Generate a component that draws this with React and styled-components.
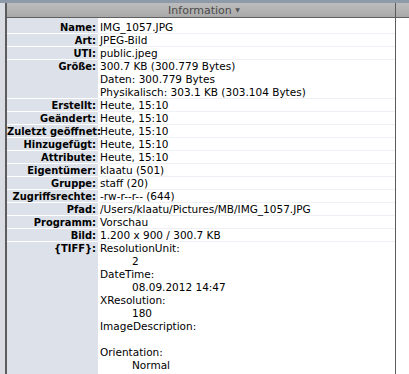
import React from 'react';
import styled, { createGlobalStyle } from 'styled-components';

const rows = [
  { label: 'Name', lines: ['IMG_1057.JPG'] },
  { label: 'Art', lines: ['JPEG-Bild'] },
  { label: 'UTI', lines: ['public.jpeg'] },
  {
    label: 'Größe',
    lines: ['300.7 KB (300.779 Bytes)', 'Daten: 300.779 Bytes', 'Physikalisch: 303.1 KB (303.104 Bytes)'],
  },
  { label: 'Erstellt', lines: ['Heute, 15:10'] },
  { label: 'Geändert', lines: ['Heute, 15:10'] },
  { label: 'Zuletzt geöffnet', lines: ['Heute, 15:10'] },
  { label: 'Hinzugefügt', lines: ['Heute, 15:10'] },
  { label: 'Attribute', lines: ['Heute, 15:10'] },
  { label: 'Eigentümer', lines: ['klaatu (501)'] },
  { label: 'Gruppe', lines: ['staff (20)'] },
  { label: 'Zugriffsrechte', lines: ['-rw-r--r-- (644)'] },
  { label: 'Pfad', lines: ['/Users/klaatu/Pictures/MB/IMG_1057.JPG'] },
  { label: 'Programm', lines: ['Vorschau'] },
  { label: 'Bild', lines: ['1.200 x 900 / 300.7 KB'] },
];

const tiff = [
  ['ResolutionUnit:', '2'],
  ['DateTime:', '08.09.2012 14:47'],
  ['XResolution:', '180'],
  ['ImageDescription:', ''],
  ['Orientation:', 'Normal'],
];

function App() {
  return (
    <>
      <GlobalStyle />
      <Window>
        <TopStrip />
        <Main>
          <Gutter />
          <Table>
            <HeaderCell>
              Information <Caret>▼</Caret>
            </HeaderCell>
            <Rows>
              {rows.map((r) => (
                <Row key={r.label}>
                  <Label>{r.label}:</Label>
                  <Value>
                    {r.lines.map((l) => (
                      <Line key={l}>{l}</Line>
                    ))}
                  </Value>
                </Row>
              ))}
              <Row $last>
                <Label $last>{'{TIFF}'}:</Label>
                <Value $last>
                  {tiff.map(([k, v]) => (
                    <React.Fragment key={k}>
                      <Line>{k}</Line>
                      <Line $indent>{v || '\u00a0'}</Line>
                    </React.Fragment>
                  ))}
                </Value>
              </Row>
            </Rows>
          </Table>
          <Extra>
            <HeaderCell />
          </Extra>
        </Main>
      </Window>
    </>
  );
}

export default App;

const GlobalStyle = createGlobalStyle`
  html, body {
    margin: 0;
    padding: 0;
    background: #fff;
  }
  body {
    font-family: "DejaVu Sans", "Liberation Sans", sans-serif;
  }
`;

const Window = styled.div`
  width: 409px;
  height: 374px;
  overflow: hidden;
  display: flex;
  flex-direction: column;
  background: #fff;
`;

const TopStrip = styled.div`
  height: 3px;
  background: #8f9aa9;
  flex: none;
`;

const Main = styled.div`
  flex: 1;
  display: flex;
  min-height: 0;
`;

const Gutter = styled.div`
  width: 5px;
  background: #d9dce3;
  flex: none;
`;

const Table = styled.div`
  width: 388px;
  flex: none;
  border-left: 2px solid #5c5c5c;
  border-right: 1px solid #5c5c5c;
  background: linear-gradient(to right, #dde2ea 91px, #fff 91px);
  display: flex;
  flex-direction: column;
`;

const Extra = styled.div`
  flex: 1;
  background: #fff;
`;

const HeaderCell = styled.div`
  height: 14px;
  border-bottom: 1px solid #5f5f5f;
  background: linear-gradient(#bdbdbd, #a9a9a9);
  color: #4a4a4a;
  font-size: 11px;
  line-height: 14px;
  text-align: center;
  padding-left: 6px;
`;

const Caret = styled.span`
  font-size: 6px;
  vertical-align: 2px;
  color: #555;
`;

const Rows = styled.div`
  padding-top: 3px;
  flex: 1;
`;

const Row = styled.div`
  display: grid;
  grid-template-columns: 91px 1fr;
  line-height: 13px;
  color: #000;
`;

const Label = styled.div`
  text-align: right;
  font-family: "DejaVu Sans Condensed", "DejaVu Sans", sans-serif;
  font-size: 11px;
  font-weight: bold;
  padding-right: 2px;
  white-space: nowrap;
  box-shadow: ${(p) => (p.$last ? 'none' : 'inset 0 -1px 0 #fff')};
`;

const Value = styled.div`
  padding-left: 2px;
  font-size: 10.5px;
  white-space: nowrap;
  box-shadow: ${(p) => (p.$last ? 'none' : 'inset 0 -1px 0 #eef0f5')};
`;

const Line = styled.div`
  padding-left: ${(p) => (p.$indent ? '32px' : '0')};
`;
